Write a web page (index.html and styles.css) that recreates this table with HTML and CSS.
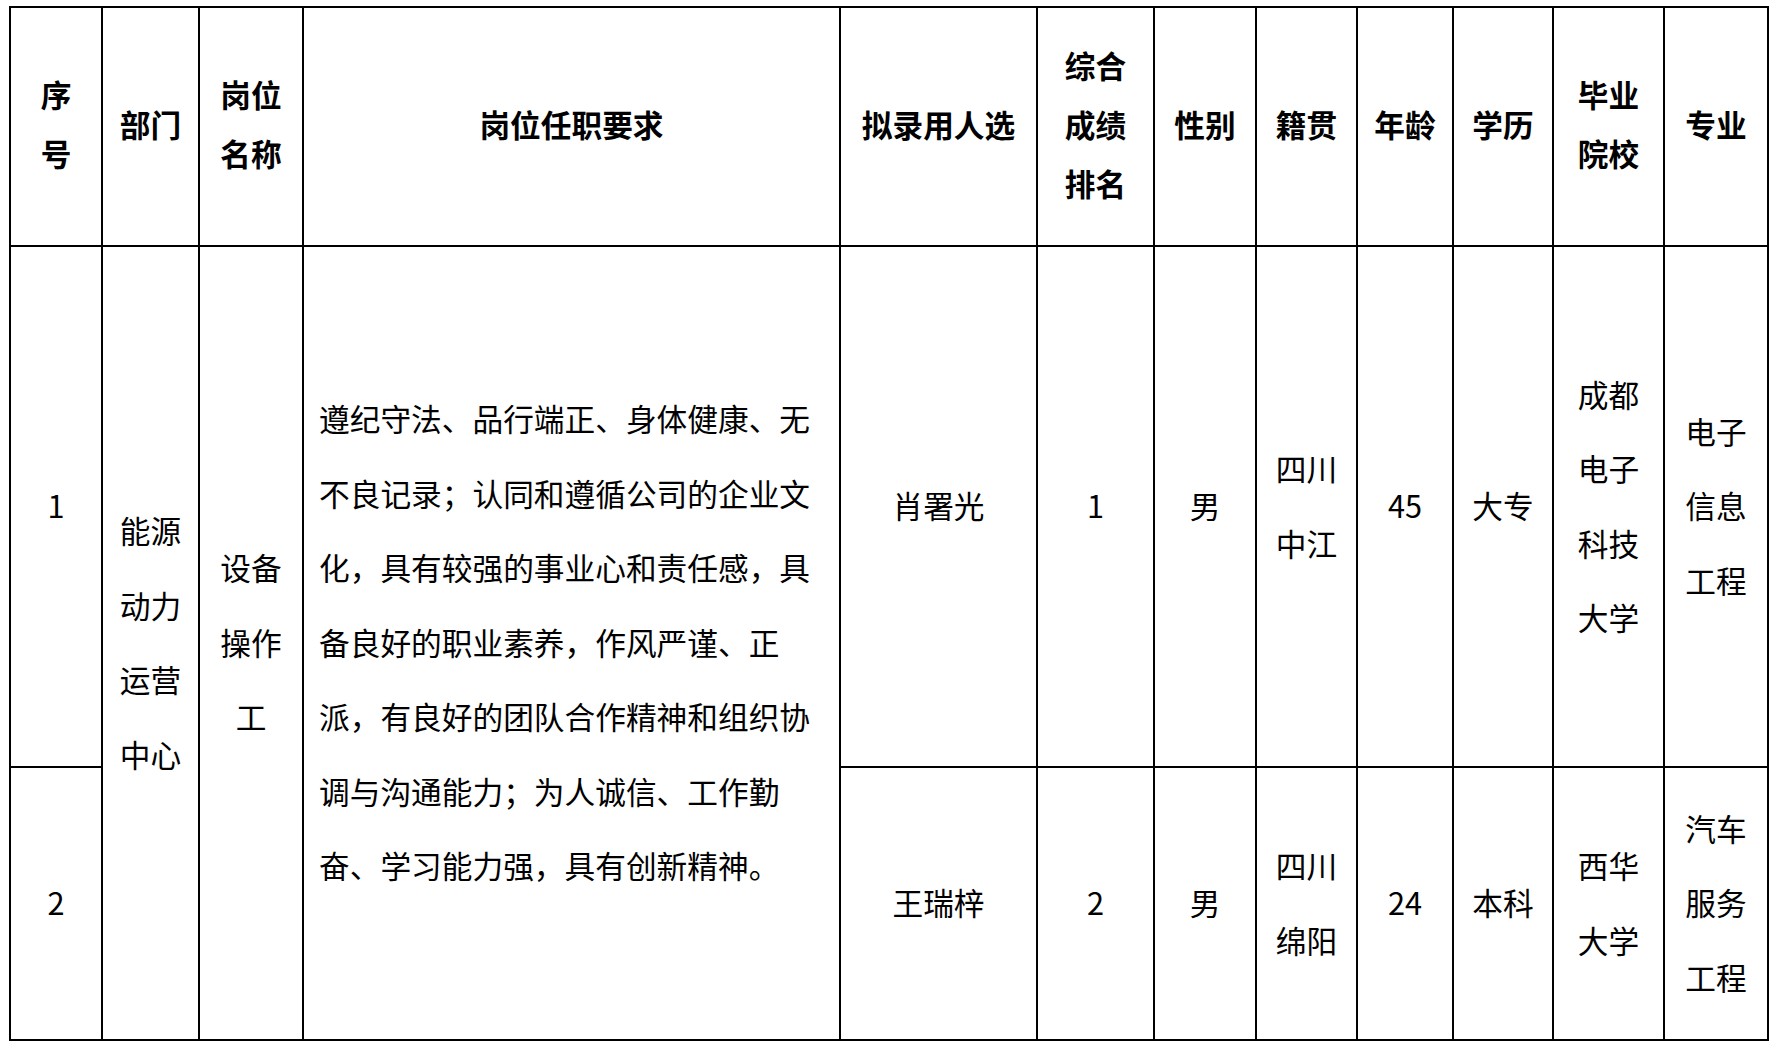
FILE: index.html
```html
<!DOCTYPE html>
<html lang="zh-CN">
<head>
<meta charset="utf-8">
<title>拟录用人员名单</title>
<link rel="stylesheet" href="styles.css">
</head>
<body>
<div class="sheet">
<table class="roster">
  <colgroup>
    <col class="c-no">
    <col class="c-dept">
    <col class="c-post">
    <col class="c-req">
    <col class="c-name">
    <col class="c-rank">
    <col class="c-sex">
    <col class="c-home">
    <col class="c-age">
    <col class="c-edu">
    <col class="c-school">
    <col class="c-major">
  </colgroup>
  <thead>
    <tr class="row-head">
      <th>序<br>号</th>
      <th>部门</th>
      <th>岗位<br>名称</th>
      <th>岗位任职要求</th>
      <th>拟录用人选</th>
      <th>综合<br>成绩<br>排名</th>
      <th>性别</th>
      <th>籍贯</th>
      <th>年龄</th>
      <th>学历</th>
      <th>毕业<br>院校</th>
      <th>专业</th>
    </tr>
  </thead>
  <tbody>
    <tr class="row-one">
      <td>1</td>
      <td rowspan="2">能源<br>动力<br>运营<br>中心</td>
      <td rowspan="2">设备<br>操作<br>工</td>
      <td rowspan="2" class="req">遵纪守法、品行端正、身体健康、无<br>不良记录；认同和遵循公司的企业文<br>化，具有较强的事业心和责任感，具<br>备良好的职业素养，作风严谨、正<br>派，有良好的团队合作精神和组织协<br>调与沟通能力；为人诚信、工作勤<br>奋、学习能力强，具有创新精神。</td>
      <td>肖署光</td>
      <td>1</td>
      <td>男</td>
      <td>四川<br>中江</td>
      <td>45</td>
      <td>大专</td>
      <td>成都<br>电子<br>科技<br>大学</td>
      <td>电子<br>信息<br>工程</td>
    </tr>
    <tr class="row-two">
      <td>2</td>
      <td>王瑞梓</td>
      <td>2</td>
      <td>男</td>
      <td>四川<br>绵阳</td>
      <td>24</td>
      <td>本科</td>
      <td>西华<br>大学</td>
      <td>汽车<br>服务<br>工程</td>
    </tr>
  </tbody>
</table>
</div>
</body>
</html>
```

FILE: styles.css
```css
html, body {
  margin: 0;
  padding: 0;
  background: #ffffff;
}

body {
  font-family: "Noto Sans CJK SC", "Microsoft YaHei", "Noto Sans", sans-serif;
  color: #000000;
}

.sheet {
  padding: 6px 0 0 9px;
}

.roster {
  border-collapse: collapse;
  table-layout: fixed;
  width: 1760px;
  border: 2px solid #000;
}

.roster th,
.roster td {
  border: 2px solid #000;
  padding: 0;
  text-align: center;
  vertical-align: middle;
  font-size: 30.7px;
}

.roster th {
  font-weight: 700;
  line-height: 59px;
  padding-bottom: 7px;
}

.roster td {
  font-weight: 400;
  line-height: 74.5px;
  padding-bottom: 2px;
}

.roster td.req {
  text-align: left;
  padding-left: 15px;
  white-space: nowrap;
}

.row-head { height: 239px; }
.row-one { height: 521px; }
.row-two { height: 273px; }

.c-no { width: 92px; }
.c-dept { width: 97px; }
.c-post { width: 104px; }
.c-req { width: 537px; }
.c-name { width: 197px; }
.c-rank { width: 117px; }
.c-sex { width: 102px; }
.c-home { width: 101px; }
.c-age { width: 96px; }
.c-edu { width: 100px; }
.c-school { width: 111px; }
.c-major { width: 104px; }
```
